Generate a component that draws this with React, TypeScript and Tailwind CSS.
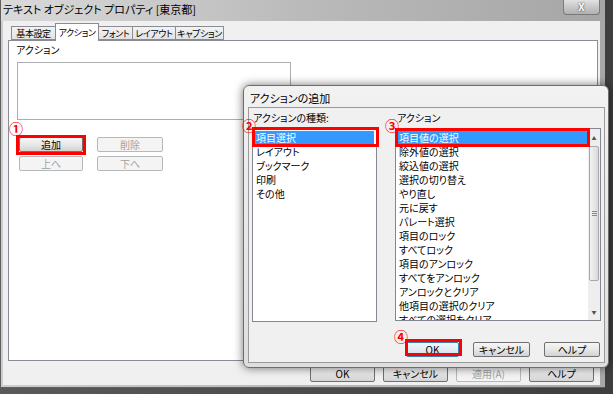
import React from 'react';

type BtnProps = { label: string; className: string; disabled?: boolean; primary?: boolean };

const Btn: React.FC<BtnProps> = ({ label, className, disabled, primary }) => (
  <div
    className={`flex items-center justify-center rounded-[2px] border text-[10px] leading-none ${
      disabled
        ? 'border-[#b5b9bc] bg-[#f4f4f4] text-[#a3a3a3]'
        : primary
        ? 'border-[#3c7fb1] bg-gradient-to-b from-[#f2f7fb] via-[#e1ecf4] to-[#c9dbe8] text-black'
        : 'border-[#707070] bg-gradient-to-b from-[#f6f6f6] via-[#e8e8e8] to-[#d2d2d2] text-black'
    } ${className}`}
  >
    {label}
  </div>
);

const kinds = ['項目選択', 'レイアウト', 'ブックマーク', '印刷', 'その他'];
const actions = [
  '項目値の選択',
  '除外値の選択',
  '絞込値の選択',
  '選択の切り替え',
  'やり直し',
  '元に戻す',
  'パレート選択',
  '項目のロック',
  'すべてロック',
  '項目のアンロック',
  'すべてをアンロック',
  'アンロックとクリア',
  '他項目の選択のクリア',
  'すべての選択をクリア',
];

const tabs = [
  { t: '基本設定', w: 'w-[45px]' },
  { t: 'アクション', w: 'w-[44px]' },
  { t: 'フォント', w: 'w-[35px]' },
  { t: 'レイアウト', w: 'w-[44px]' },
  { t: 'キャプション', w: 'w-[49px]' },
];

const Circled: React.FC<{ n: string; className: string }> = ({ n, className }) => (
  <span className={`absolute text-[14px] font-bold leading-none text-[#ff0000] ${className}`}>{n}</span>
);

export default function App() {
  return (
    <div className="relative h-[394px] w-[613px] overflow-hidden bg-gradient-to-r from-[#5a5a5a] to-[#3e3e3e] font-['Noto_Sans_CJK_JP','Liberation_Sans',sans-serif] text-black [font-feature-settings:'palt']">
      {/* main window */}
      <div className="flex h-[388px] w-[605px] flex-col border-l border-b border-[#5f5f5f] bg-gradient-to-r from-[#cdcdcd] via-[#b8b8b8] to-[#a8a8a8]">
        <div className="flex h-[21px] items-start justify-between pl-[2px] pr-[5px] bg-gradient-to-r from-[#dadada] via-[#bababa] to-[#a6a6a6]">
          <span className="mt-[2px] text-[11px] leading-[15px] text-black">テキスト オブジェクト プロパティ [東京都]</span>
          <div className="flex h-[15px] w-[37px] items-center justify-center rounded-b-[4px] border border-t-0 border-[#7a7a7a] bg-gradient-to-b from-[#e2e2e2] to-[#b0b0b0] text-[10px] font-bold leading-none text-white [text-shadow:0_0_2px_#222]">
            X
          </div>
        </div>
        <div className="ml-[2px] flex h-[364px] w-[597px] flex-col bg-[#f0f0f0]">
          {/* tabs */}
          <div className="mt-[2px] flex h-[17px] items-end pl-[8px]">
            {tabs.map((tab, i) =>
              i === 1 ? (
                <div
                  key={tab.t}
                  className={`relative z-10 -mb-px -ml-px flex h-[18px] items-center justify-center whitespace-nowrap border border-b-0 border-[#898c95] bg-white text-[9px] leading-none tracking-[-0.4px] ${tab.w}`}
                >
                  {tab.t}
                </div>
              ) : (
                <div
                  key={tab.t}
                  className={`-ml-px flex h-[14px] items-center justify-center whitespace-nowrap border border-[#898c95] bg-gradient-to-b from-[#f3f3f3] to-[#e3e3e3] text-[9px] leading-none tracking-[-0.4px] first:ml-0 ${tab.w}`}
                >
                  {tab.t}
                </div>
              )
            )}
          </div>
          {/* panel */}
          <div className="ml-[5px] flex h-[321px] w-[590px] flex-col border border-[#898c95] bg-white">
            <span className="ml-[7px] mt-[3px] text-[10px] leading-[12px]">アクション</span>
            <div className="ml-[8px] mt-[6px] h-[58px] w-[274px] border border-[#abadb3] bg-white" />
            <div className="ml-[10px] mt-[17px] flex gap-[14px]">
              <Btn label="追加" className="h-[15px] w-[64px]" />
              <Btn label="削除" className="h-[15px] w-[66px]" disabled />
            </div>
            <div className="ml-[10px] mt-[4px] flex gap-[14px]">
              <Btn label="上へ" className="h-[15px] w-[64px]" disabled />
              <Btn label="下へ" className="h-[15px] w-[66px]" disabled />
            </div>
          </div>
          <div className="mt-[5px] flex justify-end gap-[8px] pr-[6px]">
            <Btn label="OK" className="h-[16px] w-[65px]" />
            <Btn label="キャンセル" className="h-[16px] w-[65px]" />
            <Btn label="適用(A)" className="h-[16px] w-[65px]" disabled />
            <Btn label="ヘルプ" className="h-[16px] w-[65px]" />
          </div>
        </div>
      </div>

      {/* dialog window */}
      <div className="absolute left-[243px] top-[85px] flex h-[283px] w-[366px] flex-col rounded-[6px] border border-[#6d6d6d] bg-gradient-to-b from-[#f2f2f2] to-[#dedede] shadow-[0_0_10px_rgba(0,0,0,0.55)]">
        <div className="flex h-[21px] items-center pl-[6px] pt-[4px] text-[11px] leading-none">アクションの追加</div>
        <div className="ml-[4px] flex h-[256px] w-[357px] flex-col border border-[#9a9a9a] bg-[#f0f0f0] px-[3px]">
          <div className="flex gap-[18px]">
            <div className="flex w-[125px] flex-col">
              <div className="flex h-[20px] items-center pl-[1px] text-[10px] leading-none">アクションの種類:</div>
              <div className="flex h-[194px] flex-col border border-[#828790] bg-white px-[2px] pt-[2px]">
                {kinds.map((k, i) => (
                  <div
                    key={k}
                    className={`flex h-[14px] shrink-0 items-center pl-[1px] text-[10px] leading-none ${
                      i === 0 ? 'bg-[#3399ff] text-white' : ''
                    }`}
                  >
                    {k}
                  </div>
                ))}
              </div>
            </div>
            <div className="flex w-[206px] flex-col">
              <div className="flex h-[20px] items-center pl-[2px] text-[10px] leading-none">アクション</div>
              <div className="flex h-[193px] border border-[#828790] bg-white">
                <div className="flex flex-1 flex-col overflow-hidden pl-[1px] pt-[2px]">
                  {actions.map((a, i) => (
                    <div
                      key={a}
                      className={`flex h-[14px] shrink-0 items-center pl-[2px] text-[10px] leading-none ${
                        i === 0 ? 'bg-[#3399ff] text-white' : ''
                      }`}
                    >
                      {a}
                    </div>
                  ))}
                </div>
                <div className="flex w-[12px] flex-col bg-[#eeeeee]">
                  <div className="flex h-[17px] items-center justify-center text-[5px] leading-none text-[#555]">▲</div>
                  <div className="mx-[1px] flex h-[135px] flex-col items-center justify-center gap-[1px] rounded-[2px] border border-[#a8a8a8] bg-gradient-to-r from-[#f3f3f3] to-[#d9d9d9]">
                    <div className="h-px w-[5px] bg-[#8a8a8a]" />
                    <div className="h-px w-[5px] bg-[#8a8a8a]" />
                    <div className="h-px w-[5px] bg-[#8a8a8a]" />
                  </div>
                  <div className="flex-1" />
                  <div className="flex h-[17px] items-center justify-center text-[5px] leading-none text-[#555]">▼</div>
                </div>
              </div>
            </div>
          </div>
          <div className="mt-[20px] flex justify-end gap-[14px] pr-[1px]">
            <Btn label="OK" className="h-[15px] w-[53px]" primary />
            <Btn label="キャンセル" className="h-[15px] w-[57px]" />
            <Btn label="ヘルプ" className="h-[15px] w-[56px]" />
          </div>
        </div>
      </div>

      {/* annotations */}
      <div className="absolute left-[16px] top-[135px] h-[20px] w-[70px] border-[3px] border-[#ff0000]" />
      <div className="absolute left-[252px] top-[127px] h-[20px] w-[127px] border-[3px] border-[#ff0000]" />
      <div className="absolute left-[395px] top-[128px] h-[19px] w-[195px] border-[3px] border-[#ff0000]" />
      <div className="absolute left-[405px] top-[339px] h-[17px] w-[57px] border-[3px] border-[#ff0000]" />
      <Circled n="①" className="left-[9px] top-[121px]" />
      <Circled n="②" className="left-[242px] top-[118px]" />
      <Circled n="③" className="left-[385px] top-[118px]" />
      <Circled n="④" className="left-[394px] top-[329px]" />
    </div>
  );
}
